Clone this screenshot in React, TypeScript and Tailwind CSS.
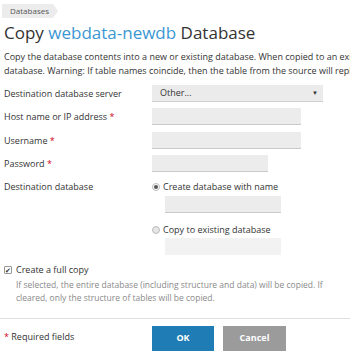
import React from "react";

const font = { fontFamily: '"Open Sans", "Liberation Sans", sans-serif' };

const inputCls = "h-[17px] bg-[#ececec] border-b border-[#c9c9c9]";

const Label = ({ text, required }: { text: string; required?: boolean }) => (
  <div className="w-[148px] shrink-0 text-[9px] text-[#333]">
    {text}
    {required && <span className="text-[#d0021b]"> *</span>}
  </div>
);

export default function App() {
  return (
    <div
      className="w-[350px] h-[359px] overflow-hidden bg-white text-[#333]"
      style={font}
    >
      {/* breadcrumb */}
      <div className="pt-[4px] pl-[2px]">
        <div className="flex items-center">
          <span className="h-[14px] leading-[14px] bg-[#ececec] pl-[8px] pr-[4px] text-[8px] text-[#555]">
            Databases
          </span>
          <span className="w-0 h-0 border-y-[7px] border-y-transparent border-l-[5px] border-l-[#ececec]" />
        </div>
      </div>

      <h1 className="mt-[3px] px-[4px] text-[17px] leading-[24px] text-[#333] whitespace-nowrap">
        Copy <span className="text-[#3b97d3]">webdata-newdb</span> Database
      </h1>

      <div className="mt-[5px] px-[4px] text-[9px] leading-[14px] whitespace-nowrap">
        <div>
          Copy the database contents into a new or existing database. When
          copied to an existing
        </div>
        <div>
          database. Warning: If table names coincide, then the table from the
          source will replace
        </div>
      </div>

      <div className="mt-[7px] px-[4px] flex flex-col">
        <div className="flex items-center">
          <Label text="Destination database server" />
          <div className="w-[171px] h-[17px] bg-[#ebebeb] border-b border-[#cfcfcf] flex items-center justify-between pl-[8px] pr-[5px] text-[9px]">
            <span>Other...</span>
            <span className="text-[6px]">▼</span>
          </div>
        </div>
        <div className="mt-[6px] flex items-center">
          <Label text="Host name or IP address" required />
          <div className={`w-[149px] ${inputCls}`} />
        </div>
        <div className="mt-[7px] flex items-center">
          <Label text="Username" required />
          <div className={`w-[149px] ${inputCls}`} />
        </div>
        <div className="mt-[6px] flex items-center">
          <Label text="Password" required />
          <div className={`w-[116px] ${inputCls}`} />
        </div>
        <div className="mt-[9px] flex items-start">
          <div className="h-[12px] flex items-center">
            <Label text="Destination database" />
          </div>
          <div className="flex flex-col">
            <div className="h-[12px] flex items-center gap-[3px] text-[9px]">
              <span className="w-[8px] h-[8px] rounded-full border border-[#bbb] bg-white flex items-center justify-center">
                <span className="w-[4px] h-[4px] rounded-full bg-[#555]" />
              </span>
              Create database with name
            </div>
            <div className={`ml-[13px] mt-[3px] w-[116px] ${inputCls}`} />
            <div className="mt-[11px] h-[12px] flex items-center gap-[3px] text-[9px]">
              <span className="w-[8px] h-[8px] rounded-full border border-[#bbb] bg-[#e5e5e5]" />
              Copy to existing database
            </div>
            <div className="ml-[13px] mt-[2px] w-[116px] h-[17px] bg-[#f2f2f2]" />
          </div>
        </div>
      </div>

      <div className="mt-[9px] px-[4px]">
        <div className="h-[12px] flex items-center gap-[4px] text-[9px]">
          <span className="w-[8px] h-[8px] border border-[#999] rounded-[1px] flex items-center justify-center text-[7px] leading-none text-[#333]">
            ✔
          </span>
          Create a full copy
        </div>
        <div className="pl-[12px] mt-[1.5px] text-[8.5px] leading-[13px] text-[#8a8a8a]">
          If selected, the entire database (including structure and data) will
          be copied. If cleared, only the structure of tables will be copied.
        </div>
      </div>

      <div className="mt-[14px] border-t border-[#e0e0e0] px-[4px] pt-[7px] flex items-start">
        <div className="w-[148px] text-[9px] pt-[4px]">
          <span className="text-[#d0021b]">*</span> Required fields
        </div>
        <button className="w-[62px] h-[25px] bg-[#1f7cb4] text-white text-[9px] font-bold">
          OK
        </button>
        <button className="ml-[9px] w-[63px] h-[25px] bg-[#9b9b9b] text-white text-[9px] font-bold">
          Cancel
        </button>
      </div>
    </div>
  );
}
